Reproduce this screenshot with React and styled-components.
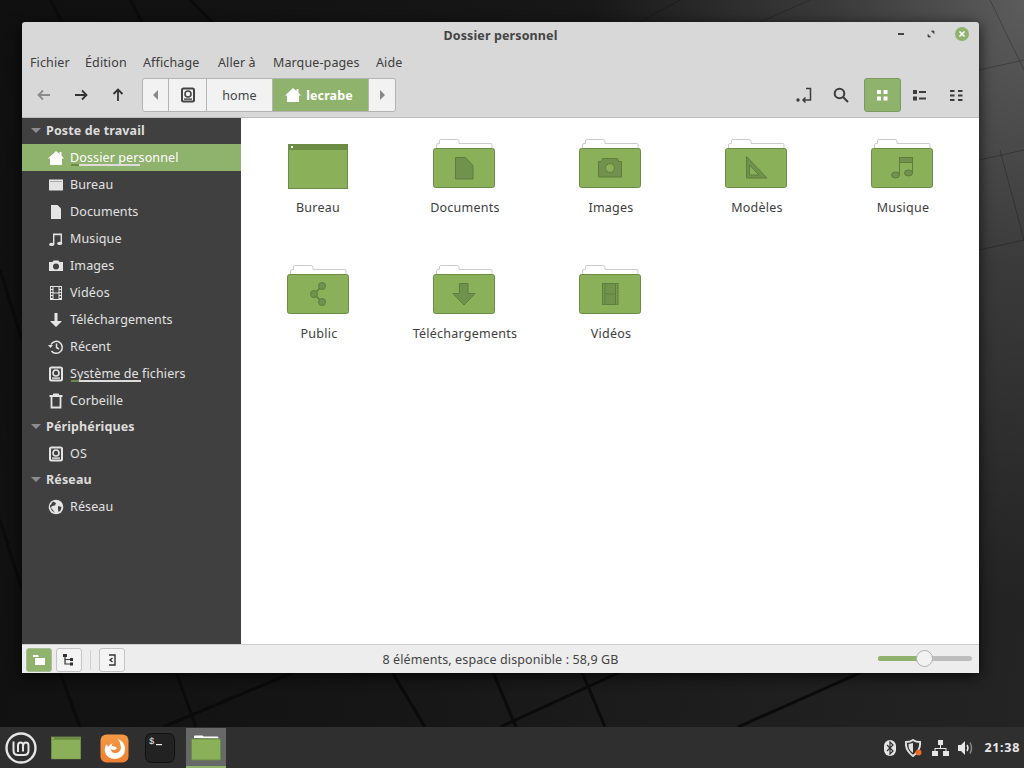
import React from "react";
import styled, { createGlobalStyle } from "styled-components";

const GREEN = "#8fb26c";
const FOLDER = "#8ab05a";
const FOLDER_EDGE = "#6c8c45";
const GLYPH = "#72914c";
const GLYPH_EDGE = "#5f7c3e";

const Global = createGlobalStyle`
  html, body { margin: 0; height: 100%; overflow: hidden; background: #151515; }
  #root { height: 100%; }
  * { box-sizing: border-box; }
`;

const Desktop = styled.div`
  position: relative;
  width: 1024px;
  height: 768px;
  overflow: hidden;
  font-family: "Noto Sans", "Open Sans", sans-serif;
  font-size: 12.5px;
  letter-spacing: 0.12px;
  background: radial-gradient(ellipse 430px 600px at 100% 0%, #5c5c5c, #3a3a3a 45%, rgba(38, 38, 38, 0) 100%),
    linear-gradient(100deg, #101010 0%, #151515 40%, #1e1e1e 75%, #242424 100%);
`;

const Wallpaper = styled.svg`
  position: absolute;
  inset: 0;
`;

const Window = styled.div`
  position: absolute;
  left: 22px;
  top: 22px;
  width: 957px;
  height: 651px;
  display: flex;
  flex-direction: column;
  background: #d8d8d8;
  border-radius: 3px 3px 0 0;
  box-shadow: 0 3px 14px rgba(0, 0, 0, 0.75);
`;

const TitleBar = styled.div`
  position: relative;
  height: 27px;
  flex: none;
  display: flex;
  align-items: center;
  justify-content: center;
  font-weight: 700;
  color: #444;
`;

const WinButtons = styled.div`
  position: absolute;
  right: 10px;
  top: 5px;
  display: flex;
  align-items: center;
  gap: 18px;
`;

const MenuBar = styled.div`
  height: 27px;
  flex: none;
  display: flex;
  align-items: center;
  padding-left: 8px;
  gap: 16px;
  color: #3d3d3d;
`;

const MenuItem = styled.span`
  width: ${(p) => p.$w}px;
  white-space: nowrap;
`;

const Toolbar = styled.div`
  height: 42px;
  flex: none;
  display: flex;
  align-items: flex-start;
  padding: 2px 4px 0 3px;
  border-bottom: 1px solid #bdbdbd;
`;

const NavButton = styled.div`
  width: 37px;
  height: 34px;
  display: flex;
  align-items: center;
  justify-content: center;
  color: ${(p) => (p.$off ? "#8b8b8b" : "#333")};
`;

const PathBar = styled.div`
  margin-left: 6px;
  height: 34px;
  display: flex;
  border: 1px solid #b4b4b4;
  border-radius: 3px;
  background: #f2f2f2;
  color: #444;
  overflow: hidden;
`;

const PathPart = styled.div`
  width: ${(p) => p.$w}px;
  display: flex;
  align-items: center;
  justify-content: center;
  gap: 5px;
  padding-right: ${(p) => (p.$active ? 3 : 0)}px;
  border-right: ${(p) => (p.$last ? "none" : "1px solid #b4b4b4")};
  background: ${(p) => (p.$active ? GREEN : "transparent")};
  color: ${(p) => (p.$active ? "#fff" : "#444")};
  font-weight: ${(p) => (p.$active ? 700 : 400)};
`;

const ToolGroup = styled.div`
  display: flex;
  margin-left: ${(p) => (p.$push ? "auto" : "5px")};
`;

const ToolButton = styled.div`
  width: 37px;
  height: 34px;
  display: flex;
  align-items: center;
  justify-content: center;
  border-radius: 3px;
  color: ${(p) => (p.$active ? "#fff" : "#3c3c3c")};
  background: ${(p) => (p.$active ? GREEN : "transparent")};
  border: 1px solid ${(p) => (p.$active ? "#7c9a5d" : "transparent")};
`;

const Body = styled.div`
  flex: 1;
  min-height: 0;
  display: flex;
`;

const Sidebar = styled.div`
  width: 219px;
  flex: none;
  background: #404040;
  color: #e2e2e2;
`;

const Heading = styled.div`
  height: 26px;
  display: flex;
  align-items: center;
  padding: 0 0 2px 9px;
  gap: 5px;
  font-weight: 700;
  color: #dcdcdc;
`;

const Caret = styled.span`
  width: 0;
  height: 0;
  border-left: 5px solid transparent;
  border-right: 5px solid transparent;
  border-top: 5px solid #8c8c8c;
`;

const Place = styled.div`
  position: relative;
  height: 27px;
  display: flex;
  align-items: center;
  padding-left: 26px;
  gap: 6px;
  background: ${(p) => (p.$active ? GREEN : "transparent")};
  color: ${(p) => (p.$active ? "#fff" : "#e2e2e2")};
`;

const PlaceIcon = styled.span`
  width: 16px;
  height: 16px;
  display: flex;
  align-items: center;
  justify-content: center;
  color: ${(p) => (p.$active ? "#fff" : "#e4e4e4")};
`;

const Usage = styled.span`
  position: absolute;
  left: 49px;
  bottom: 5px;
  width: ${(p) => p.$w}px;
  height: 2px;
  background: #dcdcdc;
  &::before {
    content: "";
    display: block;
    width: 8px;
    height: 2px;
    background: ${FOLDER_EDGE};
  }
`;

const Files = styled.div`
  flex: 1;
  background: #fff;
  padding: 21px 0 0 4px;
  display: grid;
  grid-template-columns: repeat(5, 146px);
  grid-auto-rows: 126px;
  align-content: start;
`;

const FileItem = styled.div`
  display: flex;
  flex-direction: column;
  align-items: center;
  color: #3d3d3d;
`;

const FileIcon = styled.div`
  height: 50px;
  display: flex;
  align-items: flex-end;
`;

const FileLabel = styled.div`
  margin-top: 10px;
  padding-left: ${(p) => (p.$plain ? 0 : 2)}px;
  letter-spacing: 0.25px;
  white-space: nowrap;
`;

const IconSvg = styled.svg`
  display: block;
`;

const StatusBar = styled.div`
  height: 29px;
  flex: none;
  position: relative;
  display: flex;
  align-items: center;
  padding: 1px 0 0 4px;
  gap: 4px;
  background: #ededed;
  border-top: 1px solid #cfcfcf;
  color: #444;
`;

const StatusButton = styled.div`
  width: 26px;
  height: 24px;
  display: flex;
  align-items: center;
  justify-content: center;
  border-radius: 3px;
  color: ${(p) => (p.$active ? "#fff" : "#333")};
  background: ${(p) => (p.$active ? GREEN : "#f4f4f4")};
  border: 1px solid ${(p) => (p.$active ? "#a9bd96" : "#c4c4c4")};
`;

const Separator = styled.div`
  width: 1px;
  height: 20px;
  background: #d0d0d0;
  margin: 0 4px;
`;

const StatusText = styled.div`
  position: absolute;
  left: 0;
  right: 0;
  text-align: center;
  pointer-events: none;
`;

const Zoom = styled.div`
  position: absolute;
  right: 7px;
  top: 11px;
  width: 94px;
  height: 5px;
  border-radius: 3px;
  background: #bdbdbd;
`;

const ZoomFill = styled.div`
  width: 40px;
  height: 5px;
  border-radius: 3px;
  background: ${GREEN};
`;

const ZoomKnob = styled.div`
  position: absolute;
  left: 38px;
  top: -6px;
  width: 17px;
  height: 17px;
  border-radius: 50%;
  background: #f2f2f2;
  border: 1px solid #b0b0b0;
`;

const Panel = styled.div`
  position: absolute;
  left: 0;
  right: 0;
  bottom: 0;
  height: 41px;
  display: flex;
  align-items: center;
  background: #2f2f2f;
  color: #e0e0e0;
`;

const Launcher = styled.div`
  width: ${(p) => p.$w}px;
  height: 40px;
  margin-top: 1px;
  flex: none;
  display: flex;
  align-items: center;
  justify-content: center;
`;

const RunningApp = styled(Launcher)`
  margin-left: 4px;
  background: #686868;
  border-bottom: 2px solid ${GREEN};
`;

const Tray = styled.div`
  margin-left: auto;
  display: flex;
  align-items: center;
  gap: 9px;
  padding-right: 4px;
`;

const Clock = styled.div`
  font-weight: 700;
  color: #e6e6e6;
  letter-spacing: 0.7px;
  margin-left: 1px;
`;

const HomeIcon = ({ size = 16 }) => (
  <svg width={size} height={size} viewBox="0 0 16 16" fill="currentColor">
    <path d="M8 1l3.500 3V2h2v3.800L16 8.500h-2V15H2V8.500H0z" />
  </svg>
);

const DiskIcon = ({ size = 16 }) => (
  <svg width={size} height={size} viewBox="0 0 16 16">
    <rect x="2" y="1.500" width="12" height="13" rx="1.500" fill="none" stroke="currentColor" strokeWidth="2" />
    <circle cx="8" cy="7" r="3" fill="none" stroke="currentColor" strokeWidth="1.600" />
    <rect x="4" y="11.400" width="8" height="1.400" fill="currentColor" />
  </svg>
);

const sidebarIcons = {
  home: <HomeIcon />,
  desktop: (
    <svg width="16" height="16" viewBox="0 0 16 16">
      <rect x="1" y="2.500" width="14" height="11" fill="currentColor" />
      <rect x="2" y="4" width="12" height=".7" fill="#8d8d8d" />
    </svg>
  ),
  doc: (
    <svg width="16" height="16" viewBox="0 0 16 16" fill="currentColor">
      <path d="M3 1h6.500L13 4.500V15H3z" />
    </svg>
  ),
  music: (
    <svg width="16" height="16" viewBox="0 0 16 16" fill="currentColor">
      <path d="M5 2.500h9v9.800h-1.400V4.300H6.400v9.200H5z" />
      <ellipse cx="3.600" cy="13.400" rx="2.500" ry="1.700" />
      <ellipse cx="11.700" cy="12.400" rx="2.500" ry="1.700" />
    </svg>
  ),
  camera: (
    <svg width="16" height="16" viewBox="0 0 16 16" fill="currentColor">
      <path fillRule="evenodd" d="M1 4h3.500l1-1.500h5l1 1.500H15v9H1zM8 5.500a3 3 0 1 0 0 6 3 3 0 0 0 0-6z" />
    </svg>
  ),
  film: (
    <svg width="16" height="16" viewBox="0 0 16 16" fill="currentColor">
      <path fillRule="evenodd" d="M2 1h12v14H2zM3 2v2h1.500V2zm0 3v2h1.500V5zm0 3v2h1.500V8zm0 3v2h1.500v-2zm8.500-9v2H13V2zm0 3v2H13V5zm0 3v2H13V8zm0 3v2H13v-2zM5.500 2v5.500h5V2zm0 6.500V14h5V8.500z" />
    </svg>
  ),
  download: (
    <svg width="16" height="16" viewBox="0 0 16 16" fill="currentColor">
      <path d="M6.500 1h3v8H14l-6 6-6-6h4.500z" />
    </svg>
  ),
  recent: (
    <svg width="16" height="16" viewBox="0 0 16 16" fill="none" stroke="currentColor" strokeWidth="1.500">
      <path d="M3 5.500A6 6 0 1 1 3.500 12" />
      <path d="M8.500 4.500v4l2.500 1.500" />
      <path d="M0 6h5L2.500 9z" fill="currentColor" stroke="none" />
    </svg>
  ),
  disk: <DiskIcon />,
  trash: (
    <svg width="16" height="16" viewBox="0 0 16 16" fill="none" stroke="currentColor" strokeWidth="1.800">
      <path d="M1.500 3h13M3.500 3v11.500h9V3M6 3V1.500h4V3" />
    </svg>
  ),
  globe: (
    <svg width="16" height="16" viewBox="0 0 16 16">
      <circle cx="8" cy="8" r="7.300" fill="currentColor" />
      <path d="M5 2.500 8 4 7 6.500 4 7 3 9l2 2 1.500 3L3.500 11 1.800 7zM10 7l3.500 1-1 3.500-2 1.500-.5-3z" fill="#404040" />
    </svg>
  ),
};

const glyphProps = { fill: GLYPH, stroke: GLYPH_EDGE };

const glyphs = {
  doc: <path d="M22.500 18.500h10l7.500 8v13.500H22.500z" {...glyphProps} />,
  camera: (
    <g>
      <path d="M19.500 22.500h3l1-3h15l1 3h3v15.500h-23z" {...glyphProps} />
      <circle cx="31" cy="29" r="4.500" fill={FOLDER} stroke={GLYPH_EDGE} />
    </g>
  ),
  ruler: <path fillRule="evenodd" d="M21.500 17.500v21.500h20.500zM24.500 26v10h9.500z" {...glyphProps} strokeWidth="1" />,
  music: (
    <g {...glyphProps}>
      <rect x="28.500" y="18.500" width="13" height="5" />
      <path d="M28.500 23.500V36M41.500 23.500V34" fill="none" />
      <ellipse cx="24.500" cy="36" rx="4" ry="3" />
      <ellipse cx="37.500" cy="34" rx="4" ry="3" />
    </g>
  ),
  share: (
    <g {...glyphProps}>
      <path d="M27 29 35 21M27 29 35 37" fill="none" strokeWidth="1.600" />
      <circle cx="27" cy="29" r="3.500" />
      <circle cx="35" cy="21" r="3.500" />
      <circle cx="35" cy="37" r="3.500" />
    </g>
  ),
  arrow: <path d="M26.500 18.500h8.500v10h7L31 40 20 28.500h6.500z" {...glyphProps} />,
  film: (
    <g>
      <rect x="23.500" y="18.500" width="15.500" height="21" {...glyphProps} />
      <path d="M26 18.500v21M36.500 18.500v21M26 29h10.500" stroke={GLYPH_EDGE} fill="none" />
      <path d="M24.800 19v20.500M37.700 19v20.500" stroke={FOLDER} strokeWidth=".8" strokeDasharray="1 1.500" fill="none" />
    </g>
  ),
};

const Folder = ({ glyph }) => (
  <IconSvg width="62" height="50" viewBox="0 0 62 50">
    <path d="M3.500 9V6q0-1.500 1.500-1.500h1.500V2Q6.500.5 8 .5h16q2 0 2 2v2h32q1 0 1 1.500v3" fill="#fff" stroke="#cbcbcb" />
    <rect x=".5" y="9.500" width="61" height="39" rx="2" fill={FOLDER} stroke={FOLDER_EDGE} />
    {glyphs[glyph]}
  </IconSvg>
);

const DesktopFolder = ({ w = 60, h = 45 }) => (
  <IconSvg width={w} height={h} viewBox="0 0 60 45">
    <rect x=".5" y=".5" width="59" height="44" fill={FOLDER} stroke={FOLDER_EDGE} />
    <rect x="0" y="0" width="60" height="6" fill={FOLDER_EDGE} />
    <rect x="3" y="2" width="2" height="2" fill="#fff" />
  </IconSvg>
);

const menus = [
  ["Fichier", 39],
  ["Édition", 42],
  ["Affichage", 59],
  ["Aller à", 39],
  ["Marque-pages", 87],
  ["Aide", 27],
];

const places = [
  { label: "Bureau", icon: "desktop" },
  { label: "Documents", icon: "doc" },
  { label: "Musique", icon: "music" },
  { label: "Images", icon: "camera" },
  { label: "Vidéos", icon: "film" },
  { label: "Téléchargements", icon: "download" },
  { label: "Récent", icon: "recent" },
  { label: "Système de fichiers", icon: "disk", usage: 70 },
  { label: "Corbeille", icon: "trash" },
];

const files = [
  { label: "Bureau" },
  { label: "Documents", glyph: "doc" },
  { label: "Images", glyph: "camera" },
  { label: "Modèles", glyph: "ruler" },
  { label: "Musique", glyph: "music" },
  { label: "Public", glyph: "share" },
  { label: "Téléchargements", glyph: "arrow" },
  { label: "Vidéos", glyph: "film" },
];

// dark beams of the wallpaper, only the parts that show round the window
const beams = [
  [60, 672, 80, 727],
  [176, 672, 196, 727],
  [392, 672, 425, 727],
  [493, 672, 516, 727],
  [582, 672, 605, 727],
  [163, 727, 294, 672],
  [500, 727, 620, 672],
  [738, 727, 862, 672],
  [50, 0, 62, 22],
  [130, 0, 142, 22],
  [190, 0, 212, 22],
  [0, 270, 22, 340],
  [0, 520, 22, 590],
];

const ArrowIcon = ({ d }) => (
  <svg width="16" height="16" viewBox="0 0 16 16" fill="none" stroke="currentColor" strokeWidth="1.800">
    <path d={d} />
  </svg>
);

export default function App() {
  return (
    <Desktop>
      <Global />
      <Wallpaper width="1024" height="768" viewBox="0 0 1024 768">
        {beams.map(([x1, y1, x2, y2]) => (
          <line key={`${x1}-${y1}`} x1={x1} y1={y1} x2={x2} y2={y2} stroke="#0b0b0b" strokeWidth="3" />
        ))}
        <path d="M979 70 1024 60M979 160 1024 150M979 250 1024 240M990 0 1024 70M1000 150 1024 240" stroke="rgba(0,0,0,.25)" fill="none" />
        <path d="M640 22 680 0M760 22 810 0" stroke="rgba(0,0,0,.2)" fill="none" />
      </Wallpaper>
      <Window>
        <TitleBar>
          Dossier personnel
          <WinButtons>
            <svg width="12" height="12" viewBox="0 0 12 12">
              <rect x="3" y="5" width="6" height="2" fill="#444" />
            </svg>
            <svg width="12" height="12" viewBox="0 0 12 12">
              <path d="M6.500 3H9v2.500zM5.500 9H3V6.500z" fill="#444" stroke="#444" strokeWidth=".8" />
            </svg>
            <svg width="14" height="14" viewBox="0 0 14 14">
              <circle cx="7" cy="7" r="7" fill={GREEN} />
              <path d="M4.500 4.500l5 5M9.500 4.500l-5 5" stroke="#fff" strokeWidth="1.600" />
            </svg>
          </WinButtons>
        </TitleBar>
        <MenuBar>
          {menus.map(([m, w]) => (
            <MenuItem key={m} $w={w}>
              {m}
            </MenuItem>
          ))}
        </MenuBar>
        <Toolbar>
          <NavButton $off>
            <ArrowIcon d="M14 8H2.500M7 3.500 2.500 8 7 12.500" />
          </NavButton>
          <NavButton>
            <ArrowIcon d="M2 8h11.500M9 3.500 13.500 8 9 12.500" />
          </NavButton>
          <NavButton>
            <ArrowIcon d="M8 14V2.500M3.500 7 8 2.500 12.500 7" />
          </NavButton>
          <PathBar>
            <PathPart $w={26}>
              <svg width="6" height="10" viewBox="0 0 6 10">
                <path d="M5 0v10L0 5z" fill="#888" />
              </svg>
            </PathPart>
            <PathPart $w={38}>
              <DiskIcon />
            </PathPart>
            <PathPart $w={66}>home</PathPart>
            <PathPart $w={96} $active>
              <HomeIcon />
              lecrabe
            </PathPart>
            <PathPart $w={26} $last>
              <svg width="6" height="10" viewBox="0 0 6 10">
                <path d="M1 0v10l5-5z" fill="#888" />
              </svg>
            </PathPart>
          </PathBar>
          <ToolGroup $push>
            <ToolButton>
              <svg width="16" height="16" viewBox="0 0 16 16" fill="none" stroke="currentColor" strokeWidth="1.500">
                <path d="M10 1.500h4.500V13H7M9.500 10.500 7 13l2.500 2.500" />
                <circle cx="2" cy="13" r="1.700" fill="currentColor" stroke="none" />
              </svg>
            </ToolButton>
            <ToolButton>
              <svg width="16" height="16" viewBox="0 0 16 16" fill="none" stroke="currentColor" strokeWidth="2">
                <circle cx="6.500" cy="6.500" r="4.800" />
                <path d="M10 10l5 5" />
              </svg>
            </ToolButton>
          </ToolGroup>
          <ToolGroup>
            <ToolButton $active>
              <svg width="11" height="11" viewBox="0 0 11 11" fill="currentColor">
                <path d="M0 0h4v4H0zM6.500 0h4v4h-4zM0 6.500h4v4H0zM6.500 6.500h4v4h-4z" />
              </svg>
            </ToolButton>
            <ToolButton>
              <svg width="13" height="11" viewBox="0 0 13 11" fill="currentColor">
                <path d="M0 0h4v4H0zM0 6.500h4v4H0zM6 1h7v2H6zM6 7.500h7v2H6z" />
              </svg>
            </ToolButton>
            <ToolButton>
              <svg width="13" height="11" viewBox="0 0 13 11" fill="currentColor">
                <path d="M0 0h4.500v2H0zM8 0h4.500v2H8zM0 4.500h4.500v2H0zM8 4.500h4.500v2H8zM0 9h4.500v2H0zM8 9h4.500v2H8z" />
              </svg>
            </ToolButton>
          </ToolGroup>
        </Toolbar>
        <Body>
          <Sidebar>
            <Heading>
              <Caret />
              Poste de travail
            </Heading>
            <Place $active>
              <PlaceIcon $active>{sidebarIcons.home}</PlaceIcon>
              Dossier personnel
              <Usage $w={69} />
            </Place>
            {places.map((p) => (
              <Place key={p.label}>
                <PlaceIcon>{sidebarIcons[p.icon]}</PlaceIcon>
                {p.label}
                {p.usage && <Usage $w={p.usage} />}
              </Place>
            ))}
            <Heading>
              <Caret />
              Périphériques
            </Heading>
            <Place>
              <PlaceIcon>{sidebarIcons.disk}</PlaceIcon>
              OS
            </Place>
            <Heading>
              <Caret />
              Réseau
            </Heading>
            <Place>
              <PlaceIcon>{sidebarIcons.globe}</PlaceIcon>
              Réseau
            </Place>
          </Sidebar>
          <Files>
            {files.map((f) => (
              <FileItem key={f.label}>
                <FileIcon>{f.glyph ? <Folder glyph={f.glyph} /> : <DesktopFolder />}</FileIcon>
                <FileLabel $plain={!f.glyph}>{f.label}</FileLabel>
              </FileItem>
            ))}
          </Files>
        </Body>
        <StatusBar>
          <StatusButton $active>
            <svg width="14" height="12" viewBox="0 0 14 12" fill="currentColor">
              <path d="M1 1h5l1 2H1zM3 4h10v7H3z" />
            </svg>
          </StatusButton>
          <StatusButton>
            <svg width="14" height="14" viewBox="0 0 14 14" fill="none" stroke="currentColor" strokeWidth="1.200">
              <path d="M3 3v8h6M3 6.500h6" />
              <rect x="1" y="1" width="4" height="3" fill="currentColor" stroke="none" />
              <rect x="8" y="5" width="3" height="3" fill="currentColor" stroke="none" />
              <rect x="8" y="9.500" width="3" height="3" fill="currentColor" stroke="none" />
            </svg>
          </StatusButton>
          <Separator />
          <StatusButton>
            <svg width="14" height="14" viewBox="0 0 14 14" fill="none" stroke="currentColor" strokeWidth="1.400">
              <path d="M4 2h6v10H4M7.500 5 5 7l2.500 2" />
            </svg>
          </StatusButton>
          <StatusText>8 éléments, espace disponible : 58,9 GB</StatusText>
          <Zoom>
            <ZoomFill />
            <ZoomKnob />
          </Zoom>
        </StatusBar>
      </Window>
      <Panel>
        <Launcher $w={42}>
          <svg width="32" height="32" viewBox="0 0 32 32" fill="none" stroke="#e6e6e6">
            <circle cx="16" cy="16" r="14.500" strokeWidth="2.400" />
            <path d="M8.500 9.500v9q0 4.500 4.500 4.500h6q4.500 0 4.500-4.500v-5q0-3-2.500-3t-3 3v6M13 20v-6.500q0-3 2.500-3t3 3" strokeWidth="2" />
          </svg>
        </Launcher>
        <Launcher $w={48}>
          <DesktopFolder w={30} h={24} />
        </Launcher>
        <Launcher $w={48}>
          <svg width="29" height="29" viewBox="0 0 29 29">
            <defs>
              <linearGradient id="ff" x1="0" y1="0" x2="0" y2="1">
                <stop offset="0" stopColor="#f59a45" />
                <stop offset="1" stopColor="#ee7f30" />
              </linearGradient>
            </defs>
            <rect x=".5" y=".5" width="28" height="28" rx="6" fill="url(#ff)" />
            <path d="M18 5q7 3 7 10 0 9-10 10-8 0-10-7-1-5 2-8 0 2 1 3 2-3 5-4-2 2-1 3 3 0 5 2-1 2-3 2-2 0-3-1 0 4 4 4 5 0 6-5 0-5-3-9z" fill="#fff" />
          </svg>
        </Launcher>
        <Launcher $w={44}>
          <svg width="30" height="30" viewBox="0 0 30 30">
            <rect x=".5" y=".5" width="29" height="29" rx="6" fill="#222" stroke="#111" />
            <text x="4" y="11" fontSize="9" fontFamily="Liberation Mono" fill="#eee">$</text>
            <rect x="11" y="11" width="6" height="1.200" fill="#eee" />
          </svg>
        </Launcher>
        <RunningApp $w={40}>
          <svg width="30" height="27" viewBox="0 0 30 27">
            <path d="M3 4V2.500q0-1 1-1h7q1 0 1.500 1h14q1 0 1 2z" fill="#fff" />
            <rect x=".5" y="5" width="29" height="21" rx="1" fill={FOLDER} stroke={FOLDER_EDGE} />
          </svg>
        </RunningApp>
        <Tray>
          <svg width="12" height="16" viewBox="0 0 12 16" fill="none">
            <rect x="0" y="0" width="12" height="16" rx="6" fill="#e6e6e6" />
            <path d="M3 5l6 6-3 3V2l3 3-6 6" stroke="#333" strokeWidth="1.200" />
          </svg>
          <svg width="18" height="18" viewBox="0 0 18 18">
            <path d="M8 1q3 2 7 2 1 8-7 14Q0 11 1 3q4 0 7-2z" fill="none" stroke="#e0e0e0" strokeWidth="2" />
            <path d="M8 4v10Q3 11 3.500 5z" fill="#e0e0e0" />
            <circle cx="13.500" cy="13.500" r="3" fill="#f0682a" />
          </svg>
          <svg width="17" height="16" viewBox="0 0 17 16" fill="#e6e6e6">
            <path d="M6 0h5v5H6zM0 11h6v5H0zM11 11h6v5h-6z" />
            <path d="M8 5h1v3h5.500v3h-1V9h-10v2h-1V8H8z" />
          </svg>
          <svg width="16" height="16" viewBox="0 0 16 16">
            <path d="M0 5h3l4-4v14l-4-4H0z" fill="#e6e6e6" />
            <path d="M9 5q2 3 0 6" stroke="#e6e6e6" strokeWidth="1.500" fill="none" />
            <path d="M12 2.500q3 5.500 0 11" stroke="#888" strokeWidth="1.500" fill="none" />
          </svg>
          <Clock>21:38</Clock>
        </Tray>
      </Panel>
    </Desktop>
  );
}
